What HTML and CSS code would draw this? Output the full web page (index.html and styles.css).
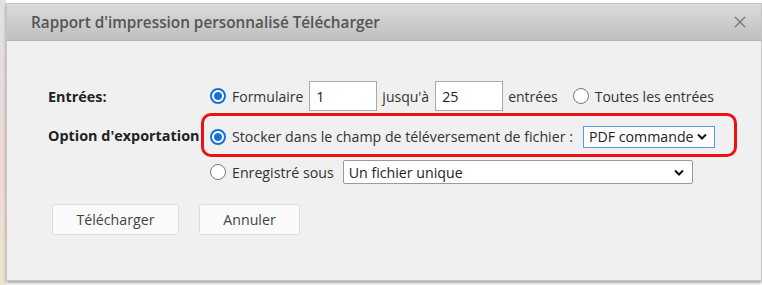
FILE: index.html
```html
<!DOCTYPE html>
<html lang="fr">
<head>
    <meta charset="UTF-8">
    <meta name="viewport" content="width=device-width, initial-scale=1.0">
    <title>Rapport d'impression personnalisé Télécharger</title>
    <link rel="stylesheet" href="styles.css">
</head>
<body>
    <div class="dialog">
        <div class="dialog-header">
            <span class="dialog-title">Rapport d'impression personnalisé Télécharger</span>
            <svg class="close" width="12" height="12" viewBox="0 0 12 12">
                <path d="M1 1 L11 11 M11 1 L1 11" stroke="#777" stroke-width="1.3" fill="none"/>
            </svg>
        </div>

        <div class="dialog-body">
            <div class="form-row row-entries">
                <div class="label">Entrées:</div>
                <div class="field">
                    <input type="radio" name="entrees" checked>
                    <span>Formulaire</span>
                    <input type="text" class="num" value="1">
                    <span>jusqu'à</span>
                    <input type="text" class="num" value="25">
                    <span>entrées</span>
                    <input type="radio" name="entrees" class="gap-left">
                    <span>Toutes les entrées</span>
                </div>
            </div>

            <div class="form-row row-export">
                <div class="label">Option d'exportation</div>
                <div class="field highlight">
                    <input type="radio" name="export" checked>
                    <span>Stocker dans le champ de téléversement de fichier :</span>
                    <div class="select select-pdf">
                        <span>PDF commande</span>
                        <svg width="10" height="7" viewBox="0 0 10 7"><path d="M1 1.5 L5 5.5 L9 1.5" stroke="#111" stroke-width="2" fill="none"/></svg>
                    </div>
                </div>
            </div>

            <div class="form-row row-save">
                <div class="label"></div>
                <div class="field">
                    <input type="radio" name="export">
                    <span>Enregistré sous</span>
                    <div class="select select-file">
                        <span>Un fichier unique</span>
                        <svg width="10" height="7" viewBox="0 0 10 7"><path d="M1 1.5 L5 5.5 L9 1.5" stroke="#111" stroke-width="2" fill="none"/></svg>
                    </div>
                </div>
            </div>

            <div class="buttons">
                <button class="btn btn-download">Télécharger</button>
                <button class="btn btn-cancel">Annuler</button>
            </div>
        </div>
    </div>
</body>
</html>
```

FILE: styles.css
```css
body {
    margin: 0;
    font-family: "Open Sans", Arial, sans-serif;
    font-size: 14.2px;
    color: #333;
    background: linear-gradient(to bottom, #e2e2e2, #ecd8d8 55%, #efe6cf) no-repeat 0 0 / 6px 100%, #fff;
    height: 285px;
    overflow: hidden;
}
.dialog {
    margin: 3px 0 0 6px;
    width: 754px;
    border: 1px solid #c6c6c6;
    box-shadow: 0 2px 3px rgba(0,0,0,0.35);
}
.dialog-header {
    height: 36px;
    display: flex;
    align-items: center;
    justify-content: space-between;
    padding: 0 15px 0 24px;
    background: linear-gradient(to bottom, #dcdcdc, #bfbfbf);
    border-bottom: 1px solid #b4b4b4;
}
.dialog-title {
    font-size: 15.3px;
    font-weight: 600;
    color: #555;
}
.dialog-body {
    background-color: #f0f0f0;
    height: 239px;
    padding: 40px 0 0 41px;
    box-sizing: border-box;
}
.form-row {
    display: flex;
    align-items: center;
}
.label {
    width: 153px;
    flex-shrink: 0;
    font-size: 14.4px;
    font-weight: bold;
    color: #222;
}
.field {
    display: flex;
    align-items: center;
    padding-left: 9px;
    color: #333;
}
.row-entries {
    height: 30px;
}
.row-entries .field {
    font-size: 14px;
}
.row-export {
    margin-top: 2px;
}
.row-save {
    margin-top: 3px;
    height: 24px;
}
.highlight {
    width: 536px;
    height: 44px;
    box-sizing: border-box;
    border: 3px solid #ee1111;
    border-radius: 10px;
    padding: 3px 0 0 6px;
}
input[type="radio"] {
    appearance: none;
    width: 16px;
    height: 16px;
    margin: 0 6px 0 0;
    border: 1px solid #7a7a7a;
    border-radius: 50%;
    background-color: #fff;
    box-sizing: border-box;
}
input[type="radio"]:checked {
    border: 2px solid #1670d8;
    background: radial-gradient(circle, #1670d8 0 3.5px, #fff 4.5px);
}
.gap-left {
    margin-left: 15px !important;
}
input.num {
    width: 68px;
    height: 30px;
    box-sizing: border-box;
    margin: 0 5px 0 6px;
    padding: 0 6px;
    border: 1px solid #a9a9a9;
    background-color: #fff;
    font-family: inherit;
    font-size: 14.2px;
    color: #222;
}
.select {
    display: flex;
    align-items: center;
    justify-content: space-between;
    box-sizing: border-box;
    background-color: #fff;
    color: #222;
}
.select-pdf {
    width: 132px;
    height: 22px;
    margin-left: 10px;
    padding: 0 7px 0 5px;
    border: 1px solid #5b9bd5;
}
.select-file {
    width: 350px;
    height: 24px;
    margin-left: 9px;
    padding: 0 8px 0 5px;
    border: 1px solid #9a9a9a;
    border-radius: 2px;
}
.buttons {
    display: flex;
    gap: 20px;
    margin-top: 20px;
    padding-left: 4px;
}
.btn {
    height: 31px;
    background-color: #fafafa;
    border: 1px solid #dcdcdc;
    border-radius: 3px;
    font-family: inherit;
    font-size: 14.2px;
    color: #444;
    cursor: pointer;
}
.btn-download {
    width: 127px;
}
.btn-cancel {
    width: 101px;
}
```
